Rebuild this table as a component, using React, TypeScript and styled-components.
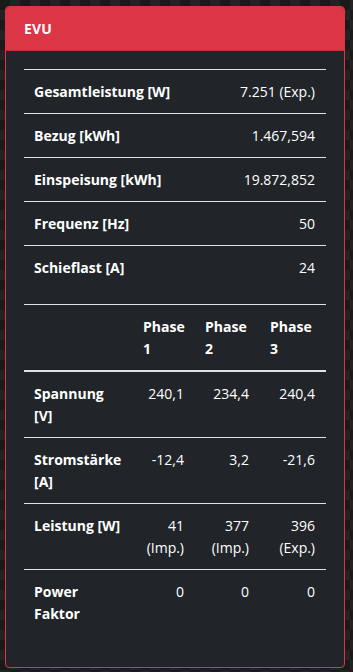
import React from "react";
import styled, { createGlobalStyle } from "styled-components";

const GlobalStyle = createGlobalStyle`
  html, body {
    margin: 0;
    padding: 0;
    background-color: #1c1c1c;
    background-image: conic-gradient(#232323 25%, #1a1a1a 0 50%, #232323 0 75%, #1a1a1a 0);
    background-size: 20px 20px;
    font-family: "Open Sans", "Noto Sans", sans-serif;
  }
`;

const Page = styled.div`
  padding: 6px 8px 5px 5px;
  min-height: 672px;
  box-sizing: border-box;
`;

const Card = styled.section`
  width: 340px;
  box-sizing: border-box;
  border: 1px solid #dc3545;
  border-radius: 4px;
  background: #212529;
  color: #fff;
  overflow: hidden;
`;

const CardHeader = styled.header`
  background: #dc3545;
  border-bottom: 1px solid #c12d3b;
  height: 43px;
  padding: 0 18px;
  display: flex;
  align-items: center;
  font-size: 14px;
  font-weight: 700;
  letter-spacing: 0.2px;
`;

const CardBody = styled.div`
  padding: 18px 18px 17px;
`;

const Table = styled.table<{ $fixed?: boolean }>`
  width: 100%;
  border-collapse: collapse;
  table-layout: ${(p) => (p.$fixed ? "fixed" : "auto")};
  font-size: 14px;
  line-height: 22px;
  margin-bottom: 15px;
`;

const Cell = styled.td<{ $align?: "left" | "right"; $bold?: boolean }>`
  border-top: 1px solid #dee2e6;
  padding: 10.5px 11px 10.5px 10px;
  text-align: ${(p) => p.$align ?? "left"};
  font-weight: ${(p) => (p.$bold ? 700 : 400)};
  vertical-align: top;
`;

const HeadCell = styled.th`
  border-top: 1px solid #dee2e6;
  border-bottom: 2px solid #dee2e6;
  padding: 10.5px 11px 10.5px 10px;
  text-align: left;
  font-weight: 700;
  vertical-align: top;
`;

const Sub = styled.span`
  display: block;
`;

const summary = [
  ["Gesamtleistung [W]", "7.251 (Exp.)"],
  ["Bezug [kWh]", "1.467,594"],
  ["Einspeisung [kWh]", "19.872,852"],
  ["Frequenz [Hz]", "50"],
  ["Schieflast [A]", "24"],
];

const phases: { label: string; values: string[][] }[] = [
  { label: "Spannung [V]", values: [["240,1"], ["234,4"], ["240,4"]] },
  { label: "Stromstärke [A]", values: [["-12,4"], ["3,2"], ["-21,6"]] },
  { label: "Leistung [W]", values: [["41", "(Imp.)"], ["377", "(Imp.)"], ["396", "(Exp.)"]] },
  { label: "Power Faktor", values: [["0"], ["0"], ["0"]] },
];

export default function App() {
  return (
    <>
      <GlobalStyle />
      <Page>
        <Card>
          <CardHeader>EVU</CardHeader>
          <CardBody>
            <Table>
              <tbody>
                {summary.map(([label, value]) => (
                  <tr key={label}>
                    <Cell $bold>{label}</Cell>
                    <Cell $align="right">{value}</Cell>
                  </tr>
                ))}
              </tbody>
            </Table>
            <Table $fixed>
              <colgroup>
                <col style={{ width: 109 }} />
                <col style={{ width: 62 }} />
                <col style={{ width: 65 }} />
                <col style={{ width: 66 }} />
              </colgroup>
              <thead>
                <tr>
                  <HeadCell />
                  <HeadCell>Phase 1</HeadCell>
                  <HeadCell>Phase 2</HeadCell>
                  <HeadCell>Phase 3</HeadCell>
                </tr>
              </thead>
              <tbody>
                {phases.map((row) => (
                  <tr key={row.label}>
                    <Cell $bold>{row.label}</Cell>
                    {row.values.map((v, i) => (
                      <Cell key={i} $align="right">
                        {v.map((part) => (
                          <Sub key={part}>{part}</Sub>
                        ))}
                      </Cell>
                    ))}
                  </tr>
                ))}
              </tbody>
            </Table>
          </CardBody>
        </Card>
      </Page>
    </>
  );
}
